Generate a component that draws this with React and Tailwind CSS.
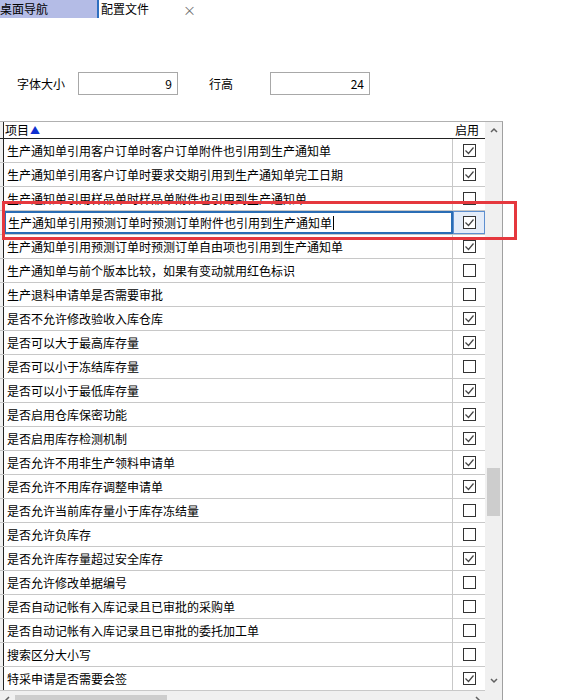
const rows = [
  ["生产通知单引用客户订单时客户订单附件也引用到生产通知单", true],
  ["生产通知单引用客户订单时要求交期引用到生产通知单完工日期", true],
  ["生产通知单引用样品单时样品单附件也引用到生产通知单", false],
  ["生产通知单引用预测订单时预测订单附件也引用到生产通知单", true],
  ["生产通知单引用预测订单时预测订单自由项也引用到生产通知单", true],
  ["生产通知单与前个版本比较，如果有变动就用红色标识", false],
  ["生产退料申请单是否需要审批", false],
  ["是否不允许修改验收入库仓库", true],
  ["是否可以大于最高库存量", true],
  ["是否可以小于冻结库存量", false],
  ["是否可以小于最低库存量", true],
  ["是否启用仓库保密功能", true],
  ["是否启用库存检测机制", true],
  ["是否允许不用非生产领料申请单", true],
  ["是否允许不用库存调整申请单", true],
  ["是否允许当前库存量小于库存冻结量", false],
  ["是否允许负库存", false],
  ["是否允许库存量超过安全库存", true],
  ["是否允许修改单据编号", false],
  ["是否自动记帐有入库记录且已审批的采购单", false],
  ["是否自动记帐有入库记录且已审批的委托加工单", false],
  ["搜索区分大小写", false],
  ["特采申请是否需要会签", true],
];

const SELECTED = 3;

function Check({ on }) {
  return (
    <div className="w-[13px] h-[13px] border border-[#333] bg-white flex items-center justify-center">
      {on && (
        <svg width="11" height="11" viewBox="0 0 11 11">
          <path d="M1.5 5.5 L4.5 8.5 L9.5 2.5" fill="none" stroke="#444" strokeWidth="1.2" />
        </svg>
      )}
    </div>
  );
}

function Chevron({ dir }) {
  const d = {
    up: "M1 5 L4 2 L7 5",
    down: "M1 2 L4 5 L7 2",
    left: "M5 1 L2 4 L5 7",
    right: "M2 1 L5 4 L2 7",
  }[dir];
  return (
    <svg width="8" height="8" viewBox="0 0 8 8">
      <path d={d} fill="none" stroke="#606060" strokeWidth="1.5" />
    </svg>
  );
}

export default function App() {
  return (
    <div
      className="relative w-[566px] h-[700px] overflow-hidden bg-white text-[12px] text-black"
      style={{ fontFamily: '"Noto Sans CJK SC", "Liberation Sans", sans-serif' }}
    >
      {/* 标签栏 */}
      <div className="flex h-[18px]">
        <div className="w-[97px] bg-[#b4bce6] flex items-center leading-none">桌面导航</div>
        <div className="w-[101px] border-l-2 border-[#2d6fc0] bg-white flex items-center justify-between pl-[2px] pr-[2px] leading-none">
          <span>配置文件</span>
          <span className="text-[#707070] text-[13px]">×</span>
        </div>
      </div>

      {/* 字体与行高 */}
      <div className="flex items-center h-[23px] mt-[54px]">
        <span className="ml-[17px] w-[61px]">字体大小</span>
        <div className="w-[100px] h-[23px] border border-[#a8a8a8] flex items-center justify-end pr-[5px]">9</div>
        <span className="ml-[31px] w-[61px]">行高</span>
        <div className="w-[100px] h-[23px] border border-[#a8a8a8] flex items-center justify-end pr-[5px]">24</div>
      </div>

      {/* 表格 */}
      <div className="mt-[26px] w-[503px] flex border-t border-[#b0b0b0] border-r border-r-[#a0a0a0]">
        <div className="w-[485px] flex flex-col">
          <div className="flex h-[17px] border-b border-[#222]">
            <div className="w-[4px] bg-[#f0f0f0] border-r border-[#222]"></div>
            <div className="w-[449px] flex items-center pl-[1px] leading-none">
              项目<span className="text-[#1030d0] text-[10px] ml-[1px]">▲</span>
            </div>
            <div className="w-[32px] flex items-center justify-end pr-[6px] leading-none">启用</div>
          </div>
          <div className="h-[552px] overflow-hidden">
            {rows.map(([text, on], i) => {
              const sel = i === SELECTED;
              return (
                <div key={i} className="flex h-[24px] border-b border-[#c8c8c8]">
                  <div className="w-[4px] bg-[#f0f0f0] border-r border-[#222]"></div>
                  <div
                    className={
                      sel
                        ? "w-[449px] flex items-center pl-[2px] border-2 border-[#2a6db5] whitespace-nowrap overflow-hidden"
                        : "w-[449px] flex items-center pl-[3px] border-r border-[#c8c8c8] whitespace-nowrap overflow-hidden"
                    }
                  >
                    {text}
                    {sel && <span className="inline-block w-px h-[14px] bg-black ml-px"></span>}
                  </div>
                  <div
                    className={
                      sel
                        ? "w-[32px] flex items-center justify-center bg-[#e4ecf8] border border-[#5d8fd0]"
                        : "w-[32px] flex items-center justify-center"
                    }
                  >
                    <Check on={on} />
                  </div>
                </div>
              );
            })}
          </div>
          <div className="h-[17px] bg-[#f0f0f0] flex items-center">
            <div className="w-[15px] flex justify-center"><Chevron dir="left" /></div>
            <div className="w-[152px] h-[10px] bg-[#cdcdcd]"></div>
            <div className="flex-1"></div>
            <div className="w-[15px] flex justify-center"><Chevron dir="right" /></div>
          </div>
        </div>
        <div className="w-[17px] bg-[#f0f0f0] flex flex-col items-center">
          <div className="h-[17px] flex items-center"><Chevron dir="up" /></div>
          <div className="h-[329px]"></div>
          <div className="w-[13px] h-[48px] bg-[#cdcdcd]"></div>
          <div className="h-[156px]"></div>
          <div className="h-[17px] flex items-center"><Chevron dir="down" /></div>
        </div>
      </div>

      {/* 红色标注框 */}
      <div className="absolute left-[2px] top-[201px] w-[515px] h-[39px] border-[3px] border-[#e5383e]"></div>
    </div>
  );
}
